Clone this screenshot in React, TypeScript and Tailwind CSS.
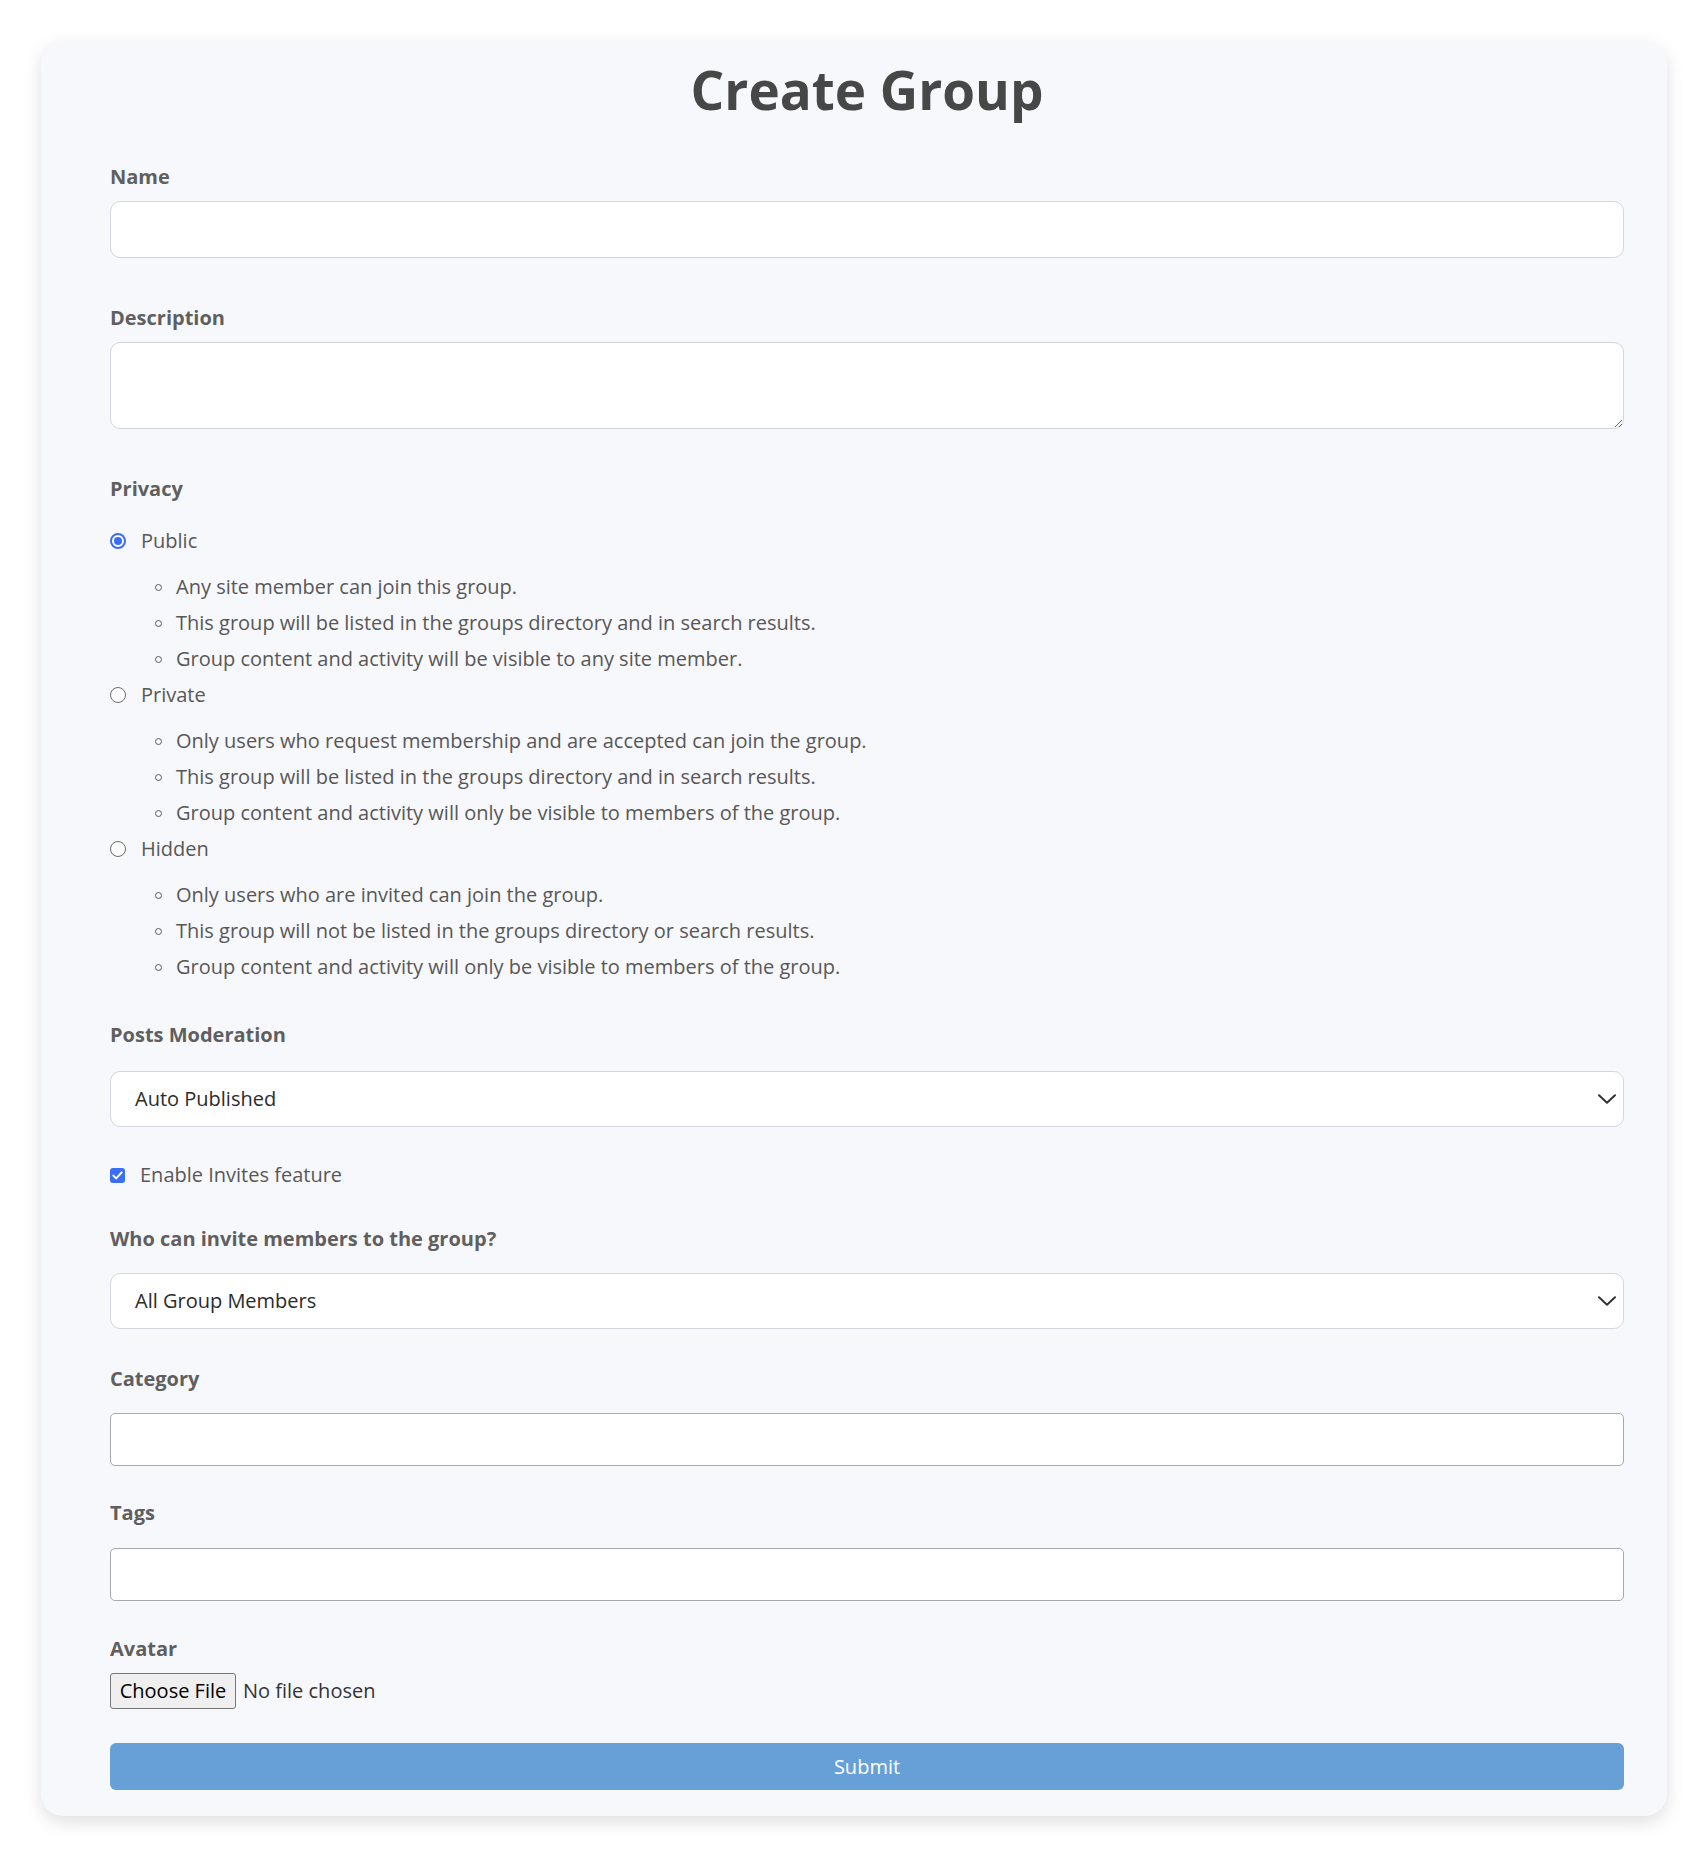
import React from "react";

const labelCls = "block text-[20px] leading-[28px] font-bold text-[#5f5f5f]";

function Radio({ checked }: { checked?: boolean }) {
  return checked ? (
    <span className="w-[16px] h-[16px] shrink-0 rounded-full border-2 border-[#3b6ef5] bg-white flex items-center justify-center">
      <span className="w-[8px] h-[8px] rounded-full bg-[#3b6ef5]" />
    </span>
  ) : (
    <span className="w-[16px] h-[16px] shrink-0 rounded-full border border-[#6a6a6a] bg-white" />
  );
}

function Option({ label, checked, items }: { label: string; checked?: boolean; items: string[] }) {
  return (
    <div>
      <label className="flex items-center h-[36px] gap-[15px] text-[20px] text-[#575757]">
        <Radio checked={checked} />
        <span>{label}</span>
      </label>
      <ul className="mt-[10px]">
        {items.map((t) => (
          <li key={t} className="flex items-center h-[36px] text-[20px] text-[#575757]">
            <span className="w-[7px] h-[7px] shrink-0 rounded-full border border-[#5a5a5a] ml-[45px] mr-[14px]" />
            <span>{t}</span>
          </li>
        ))}
      </ul>
    </div>
  );
}

function Chevron() {
  return (
    <svg width="18" height="10" viewBox="0 0 18 10" fill="none" className="pointer-events-none">
      <path d="M1 1.2 L9 8.8 L17 1.2" stroke="#333" strokeWidth="2" strokeLinecap="round" strokeLinejoin="round" />
    </svg>
  );
}

function Select({ value }: { value: string }) {
  return (
    <div className="h-[56px] w-full rounded-[10px] border border-[#d3d6de] bg-white flex items-center justify-between pl-[24px] pr-[7px]">
      <span className="text-[20px] text-[#2b2b2b]">{value}</span>
      <Chevron />
    </div>
  );
}

export default function App() {
  return (
    <div className="min-h-[1856px] bg-white pt-[41px] px-[41px] font-['Open_Sans',sans-serif]">
      <div className="w-[1626px] rounded-[22px] bg-[#f7f8fc] shadow-[0_6px_18px_rgba(0,0,0,0.13)] pt-[12px] pb-[26px] pl-[69px] pr-[43px]">
        <h1 className="text-center text-[53px] leading-[74px] font-bold text-[#474747]">Create Group</h1>

        <label className={labelCls + " mt-[36px]"}>Name</label>
        <input className="mt-[10px] block w-full h-[57px] rounded-[10px] border border-[#d3d6de] bg-white outline-none" />

        <label className={labelCls + " mt-[46px]"}>Description</label>
        <textarea className="mt-[10px] block w-full h-[87px] rounded-[10px] border border-[#d3d6de] bg-white outline-none" />

        <div className={labelCls + " mt-[46px]"}>Privacy</div>
        <div className="mt-[20px]">
          <Option
            label="Public"
            checked
            items={[
              "Any site member can join this group.",
              "This group will be listed in the groups directory and in search results.",
              "Group content and activity will be visible to any site member.",
            ]}
          />
          <Option
            label="Private"
            items={[
              "Only users who request membership and are accepted can join the group.",
              "This group will be listed in the groups directory and in search results.",
              "Group content and activity will only be visible to members of the group.",
            ]}
          />
          <Option
            label="Hidden"
            items={[
              "Only users who are invited can join the group.",
              "This group will not be listed in the groups directory or search results.",
              "Group content and activity will only be visible to members of the group.",
            ]}
          />
        </div>

        <div className={labelCls + " mt-[36px]"}>Posts Moderation</div>
        <div className="mt-[22px]">
          <Select value="Auto Published" />
        </div>

        <label className="mt-[34px] flex items-center h-[28px] gap-[15px] text-[20px] text-[#575757]">
          <span className="w-[15px] h-[15px] shrink-0 rounded-[3px] bg-[#3b6ef5] flex items-center justify-center">
            <svg width="11" height="9" viewBox="0 0 11 9" fill="none">
              <path d="M1.3 4.6 L4.2 7.4 L9.7 1.4" stroke="white" strokeWidth="2" strokeLinecap="round" strokeLinejoin="round" />
            </svg>
          </span>
          <span>Enable Invites feature</span>
        </label>

        <div className={labelCls + " mt-[36px]"}>Who can invite members to the group?</div>
        <div className="mt-[20px]">
          <Select value="All Group Members" />
        </div>

        <label className={labelCls + " mt-[36px]"}>Category</label>
        <input className="mt-[20px] block w-full h-[53px] rounded-[5px] border border-[#a9a9a9] bg-white outline-none" />

        <label className={labelCls + " mt-[33px]"}>Tags</label>
        <input className="mt-[21px] block w-full h-[53px] rounded-[5px] border border-[#a9a9a9] bg-white outline-none" />

        <div className={labelCls + " mt-[34px]"}>Avatar</div>
        <div className="mt-[10px] flex items-center h-[36px]">
          <span className="h-[36px] w-[126px] flex items-center justify-center rounded-[3px] border border-[#767676] bg-[#efefef] text-[20px] text-black">
            Choose File
          </span>
          <span className="ml-[7px] text-[20px] text-[#333]">No file chosen</span>
        </div>

        <button className="mt-[34px] block w-full h-[47px] rounded-[6px] bg-[#67a0d6] text-white text-[20px]">Submit</button>
      </div>
    </div>
  );
}
